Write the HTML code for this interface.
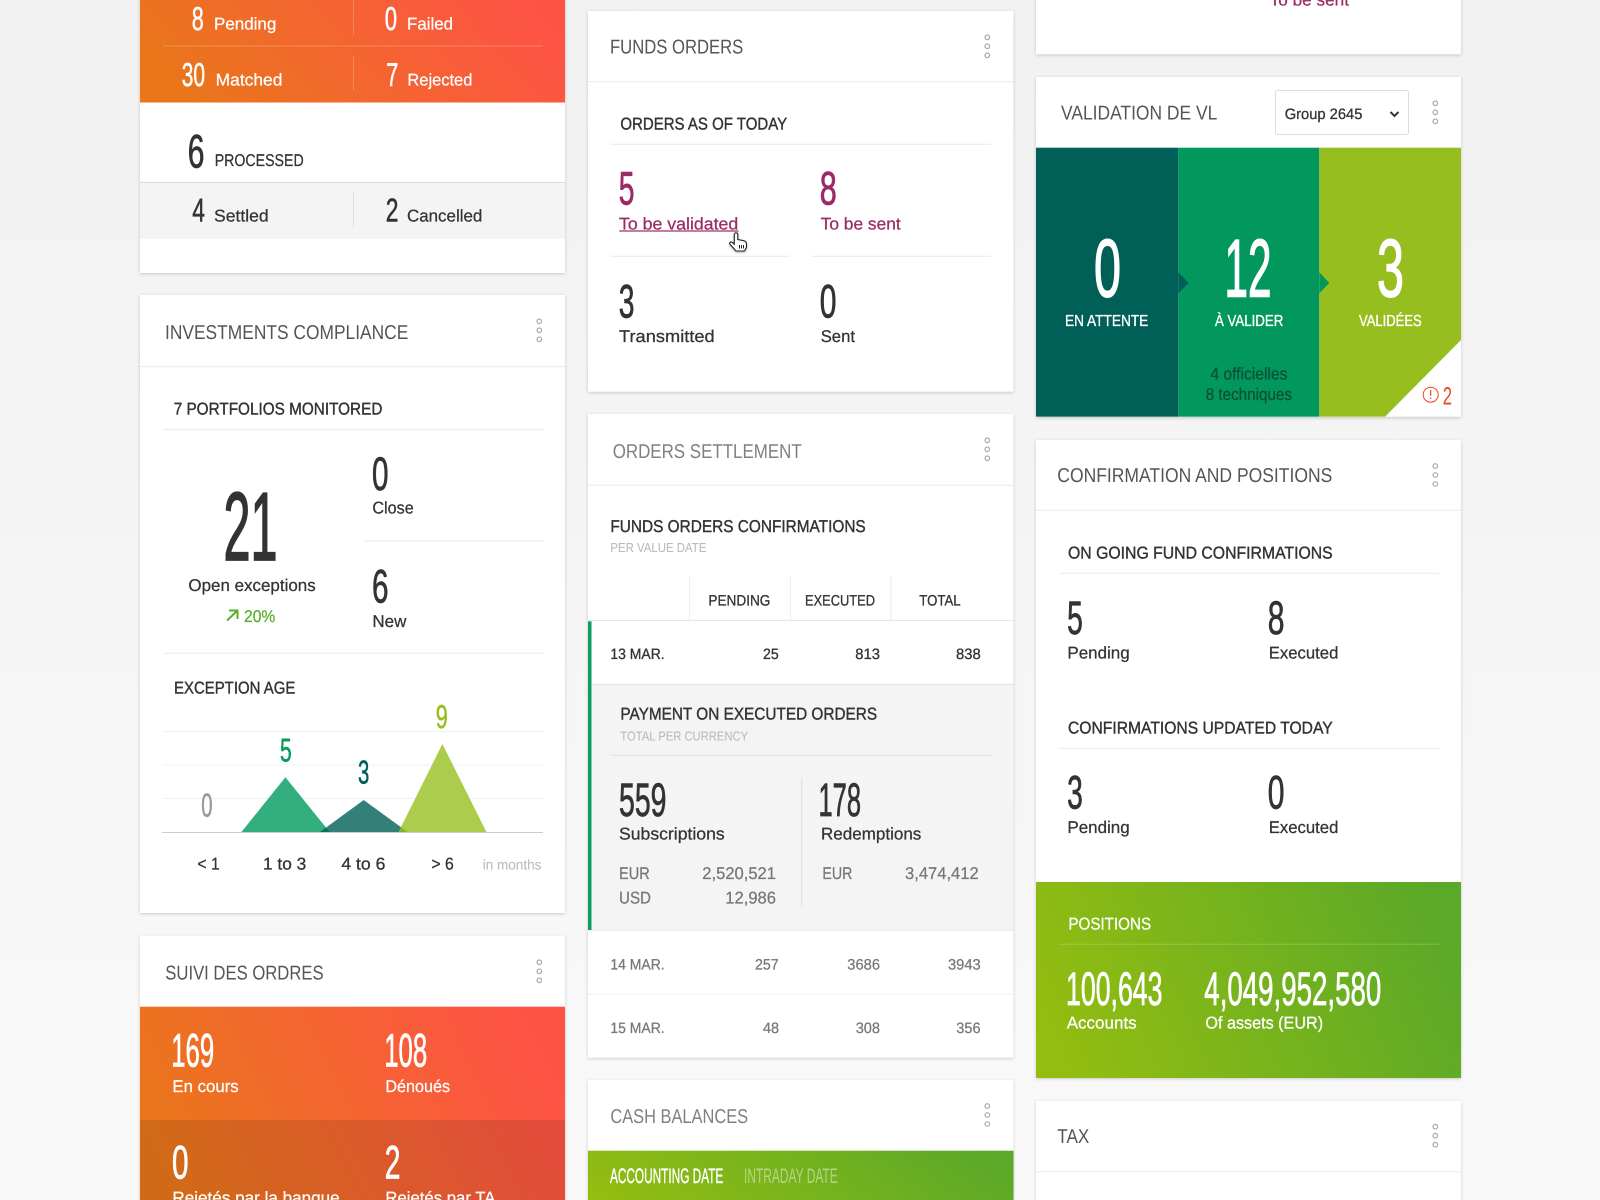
<!DOCTYPE html>
<html lang="en"><head><meta charset="utf-8"><title>Dashboard</title>
<style>
html,body{margin:0;padding:0;background:#f5f5f5;width:1600px;height:1200px;overflow:hidden}
svg{display:block}
text{font-family:"Liberation Sans",sans-serif;fill:#333;stroke:#333;stroke-width:.25;font-size:17px;text-rendering:geometricPrecision;transform:translateY(-.5px)}
.h{stroke-width:.4}
.ti{font-size:20px;fill:#555;stroke:none}
.tg{font-size:20px;fill:#808080;stroke:none}
.w{fill:#fff;stroke:#fff}
.wh{fill:#fff;stroke:#fff;stroke-width:.35}
.g{fill:#777;stroke:#777}
.s{font-size:15px}
.sb{font-size:15px;stroke-width:.3}
.sub{font-size:13px;fill:#bbb;stroke:#bbb;stroke-width:.1}
.m{fill:#9b2a66;stroke:#9b2a66}
.n33{font-size:33px;stroke-width:.55;transform:none}
.n47{font-size:47px;stroke-width:.8;transform:none}
.n97{font-size:97px;stroke-width:1.7;transform:none}
.n82{font-size:82px;stroke-width:1.5;transform:none}
.card{fill:#fff;filter:drop-shadow(0 1px 1.5px rgba(0,0,0,.18))}
.l{stroke:#ececec;stroke-width:1.2}
</style></head><body>
<svg xmlns="http://www.w3.org/2000/svg" width="1600" height="1200" viewBox="0 0 1600 1200">
<defs>
<linearGradient id="o" x1="0" y1=".62" x2="1" y2=".38"><stop offset="0" stop-color="#e9771a"/><stop offset="1" stop-color="#ff5247"/></linearGradient>
<linearGradient id="gr" x1="0" y1=".6" x2="1" y2=".4"><stop offset="0" stop-color="#93bd11"/><stop offset="1" stop-color="#5ba928"/></linearGradient>
<linearGradient id="bg" x1="0" y1="0" x2="0" y2="1"><stop offset="0" stop-color="#f1f1f1"/><stop offset="1" stop-color="#f9f9f9"/></linearGradient>
<g id="d" fill="none" stroke="#aaa" stroke-width="1.2"><circle cx="0" cy="0" r="2.3"/><circle cx="0" cy="9" r="2.3"/><circle cx="0" cy="18" r="2.3"/></g>
</defs>
<rect width="1600" height="1200" fill="url(#bg)"/>

<!-- Column 1 -->
<rect class="card" x="140" y="-10" width="425" height="283"/>
<rect x="140" y="-10" width="425" height="112.500" fill="url(#o)"/>
<rect x="140" y="183" width="425" height="56" fill="#f4f4f4"/>
<line x1="140" x2="565" y1="182.500" y2="182.500" stroke="#ddd"/>
<line x1="163" x2="543" y1="46" y2="46" stroke="#fff" stroke-opacity=".22"/>
<path d="M353.500 0V35M353.500 56V91" stroke="#fff" stroke-opacity=".22"/>
<path d="M353.500 192V227" stroke="#ddd"/>
<text class="n33 w" x="191.700" y="30" textLength="12" lengthAdjust="spacingAndGlyphs">8</text>
<text class="w" x="214" y="30" textLength="62.300" lengthAdjust="spacingAndGlyphs">Pending</text>
<text class="n33 w" x="384.700" y="30" textLength="12.300" lengthAdjust="spacingAndGlyphs">0</text>
<text class="w" x="407" y="30" textLength="46" lengthAdjust="spacingAndGlyphs">Failed</text>
<text class="n33 w" x="181.700" y="86" textLength="23.300" lengthAdjust="spacingAndGlyphs">30</text>
<text class="w" x="215.700" y="86" textLength="66.700" lengthAdjust="spacingAndGlyphs">Matched</text>
<text class="n33 w" x="386.300" y="86" textLength="12" lengthAdjust="spacingAndGlyphs">7</text>
<text class="w" x="407.400" y="86" textLength="65" lengthAdjust="spacingAndGlyphs">Rejected</text>
<text class="n47" x="187.800" y="167.300" textLength="16.700" lengthAdjust="spacingAndGlyphs">6</text>
<text x="214.700" y="166.700" textLength="89" lengthAdjust="spacingAndGlyphs">PROCESSED</text>
<text class="n33" x="192.300" y="221.700" textLength="12.700" lengthAdjust="spacingAndGlyphs">4</text>
<text x="214" y="222" textLength="54.700" lengthAdjust="spacingAndGlyphs">Settled</text>
<text class="n33" x="385.700" y="221.700" textLength="12.700" lengthAdjust="spacingAndGlyphs">2</text>
<text x="407" y="222" textLength="75.300" lengthAdjust="spacingAndGlyphs">Cancelled</text>

<rect class="card" x="140" y="295" width="425" height="618"/>
<line class="l" x1="140" x2="565" y1="366.500" y2="366.500"/>
<text class="ti" x="165" y="339.300" textLength="243.300" lengthAdjust="spacingAndGlyphs">INVESTMENTS COMPLIANCE</text>
<use href="#d" x="539.300" y="321.300"/>
<text class="h" x="173.700" y="415" textLength="208.700" lengthAdjust="spacingAndGlyphs">7 PORTFOLIOS MONITORED</text>
<line class="l" x1="163" x2="544" y1="429.500" y2="429.500"/>
<text class="n97" x="223.500" y="560" textLength="54" lengthAdjust="spacingAndGlyphs">21</text>
<text x="188.400" y="591.700" textLength="127.300" lengthAdjust="spacingAndGlyphs">Open exceptions</text>
<path d="M227 620.500L237.500 610.500M229 610.500H237.500V619" fill="none" stroke="#5cae2a" stroke-width="2"/>
<text x="244" y="622.700" textLength="31.300" lengthAdjust="spacingAndGlyphs" style="fill:#5cae2a;stroke:#5cae2a">20%</text>
<text class="n47" x="372" y="490" textLength="16.500" lengthAdjust="spacingAndGlyphs">0</text>
<text x="372.400" y="514" textLength="41.300" lengthAdjust="spacingAndGlyphs">Close</text>
<line class="l" x1="364" x2="543" y1="541" y2="541"/>
<text class="n47" x="372" y="602.700" textLength="16.500" lengthAdjust="spacingAndGlyphs">6</text>
<text x="372.400" y="627.300" textLength="34" lengthAdjust="spacingAndGlyphs">New</text>
<line class="l" x1="163" x2="544" y1="653.300" y2="653.300"/>
<text class="h" x="174" y="694" textLength="121.300" lengthAdjust="spacingAndGlyphs">EXCEPTION AGE</text>
<path d="M163 731.500H544M163 765H544M163 798.500H544" stroke="#f1f1f1"/>
<text class="n33" x="435.700" y="727.800" textLength="12" lengthAdjust="spacingAndGlyphs" style="fill:#97c01e;stroke:#97c01e">9</text>
<text class="n33" x="280" y="761.700" textLength="11.700" lengthAdjust="spacingAndGlyphs" style="fill:#0a9a5f;stroke:#0a9a5f">5</text>
<text class="n33" x="358" y="783.300" textLength="11.300" lengthAdjust="spacingAndGlyphs" style="fill:#006058;stroke:#006058">3</text>
<text class="n33" x="201.300" y="816.700" textLength="11.300" lengthAdjust="spacingAndGlyphs" style="fill:#999;stroke:#999">0</text>
<path d="M241 832.500L285.400 777.300L330 832.500Z" fill="#009a5f" fill-opacity=".8"/>
<path d="M319.300 832.500L363.700 800L408.300 832.500Z" fill="#006058" fill-opacity=".8"/>
<path d="M398.300 832.500L442.400 744L486.700 832.500Z" fill="#97c01e" fill-opacity=".8"/>
<line x1="162" x2="543" y1="832.500" y2="832.500" stroke="#ccc"/>
<text class="sb" x="197.400" y="870" textLength="22.300" lengthAdjust="spacingAndGlyphs" style="font-size:17px">&lt; 1</text>
<text class="sb" x="263" y="870" textLength="43.300" lengthAdjust="spacingAndGlyphs" style="font-size:17px">1 to 3</text>
<text class="sb" x="341.400" y="870" textLength="44" lengthAdjust="spacingAndGlyphs" style="font-size:17px">4 to 6</text>
<text class="sb" x="431.400" y="870" textLength="22.300" lengthAdjust="spacingAndGlyphs" style="font-size:17px">&gt; 6</text>
<text x="482.700" y="870" textLength="58.700" lengthAdjust="spacingAndGlyphs" style="font-size:14px;fill:#bbb;stroke:#bbb;stroke-width:.1">in months</text>

<rect class="card" x="140" y="935.700" width="425" height="300"/>
<text class="ti" x="165.300" y="980" textLength="158.300" lengthAdjust="spacingAndGlyphs">SUIVI DES ORDRES</text>
<use href="#d" x="539.300" y="962.300"/>
<rect x="140" y="1006.700" width="425" height="200" fill="url(#o)"/>
<rect x="140" y="1120" width="425" height="90" fill="#000" fill-opacity=".1"/>
<text class="n47 w" x="171.200" y="1066.700" textLength="43" lengthAdjust="spacingAndGlyphs">169</text>
<text class="n47 w" x="384.200" y="1066.700" textLength="43" lengthAdjust="spacingAndGlyphs">108</text>
<text class="w" x="172.400" y="1092.300" textLength="66.300" lengthAdjust="spacingAndGlyphs">En cours</text>
<text class="w" x="385.400" y="1092.300" textLength="64.700" lengthAdjust="spacingAndGlyphs">Dénoués</text>
<text class="n47 w" x="172" y="1178.300" textLength="16.500" lengthAdjust="spacingAndGlyphs">0</text>
<text class="n47 w" x="384.800" y="1178.300" textLength="15.700" lengthAdjust="spacingAndGlyphs">2</text>
<text class="w" x="172.400" y="1204" textLength="167.300" lengthAdjust="spacingAndGlyphs">Rejetés par la banque</text>
<text class="w" x="385.400" y="1204" textLength="110" lengthAdjust="spacingAndGlyphs">Rejetés par TA</text>

<!-- Column 2 -->
<rect class="card" x="588" y="11" width="425.500" height="380.700"/>
<line class="l" x1="588" x2="1013.500" y1="81.700" y2="81.700"/>
<text class="ti" x="610" y="54" textLength="133.300" lengthAdjust="spacingAndGlyphs">FUNDS ORDERS</text>
<use href="#d" x="987.300" y="37.300"/>
<text class="h" x="620.400" y="130" textLength="166.700" lengthAdjust="spacingAndGlyphs">ORDERS AS OF TODAY</text>
<line class="l" x1="610.300" x2="991" y1="144.300" y2="144.300"/>
<text class="n47 m" x="618.800" y="204.300" textLength="15.700" lengthAdjust="spacingAndGlyphs">5</text>
<text class="n47 m" x="819.800" y="204.300" textLength="17" lengthAdjust="spacingAndGlyphs">8</text>
<text class="m" x="619" y="229.800" textLength="119.300" lengthAdjust="spacingAndGlyphs">To be validated</text>
<rect x="619.300" y="230.400" width="119.300" height="1.200" fill="#9b2a66"/>
<text class="m" x="820.700" y="229.800" textLength="80" lengthAdjust="spacingAndGlyphs">To be sent</text>
<line class="l" x1="610" x2="789.700" y1="256.300" y2="256.300"/>
<line class="l" x1="812" x2="991" y1="256.300" y2="256.300"/>
<text class="n47" x="618.800" y="317.700" textLength="15.700" lengthAdjust="spacingAndGlyphs">3</text>
<text class="n47" x="819.800" y="317.700" textLength="16.700" lengthAdjust="spacingAndGlyphs">0</text>
<text x="619" y="342.700" textLength="95.700" lengthAdjust="spacingAndGlyphs">Transmitted</text>
<text x="820.700" y="342.700" textLength="34.300" lengthAdjust="spacingAndGlyphs">Sent</text>
<path d="M736 232.800c1.100 0 1.800.8 1.800 1.900V239.600l5.400 1c2 .4 3.300 1.500 3.300 3.400v3.200l-2 3.800h-8.500l-6-6.800c-1-1.100.6-3 2-1.900l2.300 1.800V234.700c0-1.100.8-1.900 1.700-1.900z" fill="#fff" stroke="#222" stroke-width="1.100" style="filter:drop-shadow(0 1px 1px rgba(0,0,0,.3))"/>
<path d="M739.500 245v3.500M741.500 245v3.500M743.500 245v3.500" stroke="#222"/>

<rect class="card" x="588" y="414" width="425.500" height="643.700"/>
<line class="l" x1="588" x2="1013.500" y1="485.300" y2="485.300"/>
<text class="tg" x="612.700" y="458.300" textLength="189" lengthAdjust="spacingAndGlyphs">ORDERS SETTLEMENT</text>
<use href="#d" x="987.300" y="440.300"/>
<text class="h" x="610.400" y="532.300" textLength="255.300" lengthAdjust="spacingAndGlyphs">FUNDS ORDERS CONFIRMATIONS</text>
<text class="sub" x="610.400" y="552.300" textLength="96" lengthAdjust="spacingAndGlyphs">PER VALUE DATE</text>
<path d="M689.500 575.700V620M790.500 575.700V620M891 575.700V620" stroke="#eee" stroke-width="1.200"/>
<text class="sb" x="708.400" y="606" textLength="62" lengthAdjust="spacingAndGlyphs">PENDING</text>
<text class="sb" x="805" y="606" textLength="70" lengthAdjust="spacingAndGlyphs">EXECUTED</text>
<text class="sb" x="919.300" y="606" textLength="41.300" lengthAdjust="spacingAndGlyphs">TOTAL</text>
<line x1="588" x2="1013.500" y1="620.500" y2="620.500" stroke="#e8e8e8"/>
<rect x="588" y="684.300" width="425.500" height="245.700" fill="#f4f4f4"/>
<line x1="588" x2="1013.500" y1="684.300" y2="684.300" stroke="#e2e2e2"/>
<line x1="588" x2="1013.500" y1="930.300" y2="930.300" stroke="#e8e8e8"/>
<rect x="588" y="621.300" width="3.500" height="308.700" fill="#0a9f62"/>
<text class="sb" x="610.400" y="659.300" textLength="54.300" lengthAdjust="spacingAndGlyphs">13 MAR.</text>
<text class="sb" x="763" y="659.300" textLength="15.700" lengthAdjust="spacingAndGlyphs">25</text>
<text class="sb" x="855.300" y="659.300" textLength="24.700" lengthAdjust="spacingAndGlyphs">813</text>
<text class="sb" x="956" y="659.300" textLength="24.700" lengthAdjust="spacingAndGlyphs">838</text>
<text class="h" x="620.400" y="720" textLength="256.700" lengthAdjust="spacingAndGlyphs">PAYMENT ON EXECUTED ORDERS</text>
<text class="sub" x="620.400" y="741" textLength="127.700" lengthAdjust="spacingAndGlyphs">TOTAL PER CURRENCY</text>
<line x1="610.700" x2="991" y1="755.300" y2="755.300" stroke="#e2e2e2"/>
<line x1="801.700" x2="801.700" y1="778.300" y2="907.300" stroke="#ddd"/>
<text class="n47" x="619" y="816" textLength="47.500" lengthAdjust="spacingAndGlyphs">559</text>
<text class="n47" x="818.500" y="816" textLength="42.500" lengthAdjust="spacingAndGlyphs">178</text>
<text x="619" y="840" textLength="105.700" lengthAdjust="spacingAndGlyphs">Subscriptions</text>
<text x="821" y="840" textLength="100.300" lengthAdjust="spacingAndGlyphs">Redemptions</text>
<text class="g" x="619" y="879.300" textLength="30.700" lengthAdjust="spacingAndGlyphs">EUR</text>
<text class="g" x="702.300" y="879.300" textLength="73.700" lengthAdjust="spacingAndGlyphs">2,520,521</text>
<text class="g" x="619" y="904" textLength="32" lengthAdjust="spacingAndGlyphs">USD</text>
<text class="g" x="725.300" y="904" textLength="50.700" lengthAdjust="spacingAndGlyphs">12,986</text>
<text class="g" x="822.400" y="879.300" textLength="30" lengthAdjust="spacingAndGlyphs">EUR</text>
<text class="g" x="905" y="879.300" textLength="73.700" lengthAdjust="spacingAndGlyphs">3,474,412</text>
<text class="g s" x="610.400" y="970" textLength="54.300" lengthAdjust="spacingAndGlyphs">14 MAR.</text>
<text class="g s" x="755" y="970" textLength="23.700" lengthAdjust="spacingAndGlyphs">257</text>
<text class="g s" x="847.300" y="970" textLength="32.700" lengthAdjust="spacingAndGlyphs">3686</text>
<text class="g s" x="948" y="970" textLength="32.700" lengthAdjust="spacingAndGlyphs">3943</text>
<line x1="588" x2="1013.500" y1="994.300" y2="994.300" stroke="#f0f0f0"/>
<text class="g s" x="610.400" y="1033.300" textLength="54.300" lengthAdjust="spacingAndGlyphs">15 MAR.</text>
<text class="g s" x="763" y="1033.300" textLength="16" lengthAdjust="spacingAndGlyphs">48</text>
<text class="g s" x="855.700" y="1033.300" textLength="24.300" lengthAdjust="spacingAndGlyphs">308</text>
<text class="g s" x="956.300" y="1033.300" textLength="24.300" lengthAdjust="spacingAndGlyphs">356</text>

<rect class="card" x="588" y="1080" width="425.500" height="140"/>
<text class="tg" x="610.400" y="1123.300" textLength="137.700" lengthAdjust="spacingAndGlyphs">CASH BALANCES</text>
<use href="#d" x="987.300" y="1106" style="stroke:#888"/>
<rect x="588" y="1150.700" width="425.500" height="60" fill="url(#gr)"/>
<text class="w" x="610" y="1183.300" textLength="113.300" lengthAdjust="spacingAndGlyphs" style="font-size:21px;stroke-width:.4">ACCOUNTING DATE</text>
<text x="744" y="1183.300" textLength="93.700" lengthAdjust="spacingAndGlyphs" style="font-size:21px;fill:#fff;fill-opacity:.45;stroke:none">INTRADAY DATE</text>

<!-- Column 3 -->
<rect class="card" x="1036" y="-20" width="425" height="74.300"/>
<text class="m" x="1269.700" y="6" textLength="79.300" lengthAdjust="spacingAndGlyphs">To be sent</text>

<rect class="card" x="1036" y="77" width="425" height="340"/>
<text class="ti" x="1061" y="120" textLength="156.300" lengthAdjust="spacingAndGlyphs">VALIDATION DE VL</text>
<rect x="1275.500" y="90.500" width="133" height="44" rx="2" fill="#fff" stroke="#ddd"/>
<text class="sb" x="1284.700" y="119.300" textLength="77.700" lengthAdjust="spacingAndGlyphs">Group 2645</text>
<path d="M1390.500 112L1394.500 116L1398.500 112" fill="none" stroke="#333" stroke-width="2"/>
<use href="#d" x="1435.300" y="103.300"/>
<rect x="1036" y="147.700" width="142.300" height="269" fill="#006058"/>
<rect x="1178.300" y="147.700" width="141" height="269" fill="#02975d"/>
<rect x="1319.300" y="147.700" width="141.700" height="269" fill="#96be1e"/>
<path d="M1178.300 272.300L1188.700 283L1178.300 293.300Z" fill="#006058"/>
<path d="M1319.300 272.300L1329.300 283L1319.300 293.300Z" fill="#02975d"/>
<path d="M1461 340V416.700H1385Z" fill="#fff"/>
<text class="n82 w" x="1094" y="296.700" textLength="27" lengthAdjust="spacingAndGlyphs">0</text>
<text class="n82 w" x="1224.500" y="296.700" textLength="47" lengthAdjust="spacingAndGlyphs">12</text>
<text class="n82 w" x="1377" y="296.700" textLength="27" lengthAdjust="spacingAndGlyphs">3</text>
<text class="wh" x="1065" y="326.700" textLength="83.300" lengthAdjust="spacingAndGlyphs" style="font-size:16px">EN ATTENTE</text>
<text class="wh" x="1215" y="326.700" textLength="68.300" lengthAdjust="spacingAndGlyphs" style="font-size:16px">À VALIDER</text>
<text class="wh" x="1359" y="326.700" textLength="62.700" lengthAdjust="spacingAndGlyphs" style="font-size:16px">VALIDÉES</text>
<text x="1210.400" y="380" textLength="77" lengthAdjust="spacingAndGlyphs" style="fill:#0a4f38;stroke:#0a4f38">4 officielles</text>
<text x="1205.700" y="400.700" textLength="86.300" lengthAdjust="spacingAndGlyphs" style="fill:#0a4f38;stroke:#0a4f38">8 techniques</text>
<circle cx="1430.700" cy="394.700" r="7.500" fill="none" stroke="#f0451e" stroke-width="1"/>
<path d="M1430.700 390V395.800M1430.700 397.500V399" stroke="#f0451e" stroke-width="1.200"/>
<text x="1442.700" y="404.300" textLength="9.300" lengthAdjust="spacingAndGlyphs" style="font-size:25px;fill:#f0451e;stroke:none;transform:none">2</text>

<rect class="card" x="1036" y="440" width="425" height="638"/>
<line class="l" x1="1036" x2="1461" y1="510.300" y2="510.300"/>
<text class="ti" x="1057.300" y="482.700" textLength="275" lengthAdjust="spacingAndGlyphs">CONFIRMATION AND POSITIONS</text>
<use href="#d" x="1435.300" y="466"/>
<text class="h" x="1068" y="559" textLength="264.700" lengthAdjust="spacingAndGlyphs">ON GOING FUND CONFIRMATIONS</text>
<line class="l" x1="1058.700" x2="1439" y1="573.300" y2="573.300"/>
<text class="n47" x="1067.100" y="634" textLength="15.700" lengthAdjust="spacingAndGlyphs">5</text>
<text class="n47" x="1267.800" y="634" textLength="16.700" lengthAdjust="spacingAndGlyphs">8</text>
<text x="1067.400" y="659" textLength="62.300" lengthAdjust="spacingAndGlyphs">Pending</text>
<text x="1268.700" y="659" textLength="69.700" lengthAdjust="spacingAndGlyphs">Executed</text>
<text class="h" x="1068" y="734" textLength="264.700" lengthAdjust="spacingAndGlyphs">CONFIRMATIONS UPDATED TODAY</text>
<line class="l" x1="1058.700" x2="1439" y1="748.300" y2="748.300"/>
<text class="n47" x="1067.100" y="808.700" textLength="15.700" lengthAdjust="spacingAndGlyphs">3</text>
<text class="n47" x="1267.800" y="808.700" textLength="16.700" lengthAdjust="spacingAndGlyphs">0</text>
<text x="1067.400" y="833.300" textLength="62.300" lengthAdjust="spacingAndGlyphs">Pending</text>
<text x="1268.700" y="833.300" textLength="69.700" lengthAdjust="spacingAndGlyphs">Executed</text>
<rect x="1036" y="882" width="425" height="196" fill="url(#gr)"/>
<text class="w" x="1068.400" y="930" textLength="82.700" lengthAdjust="spacingAndGlyphs">POSITIONS</text>
<line x1="1058.700" x2="1439" y1="944.300" y2="944.300" stroke="#fff" stroke-opacity=".2"/>
<text class="n47 w" x="1066" y="1005" textLength="96.500" lengthAdjust="spacingAndGlyphs">100,643</text>
<text class="n47 w" x="1204.300" y="1005" textLength="177" lengthAdjust="spacingAndGlyphs">4,049,952,580</text>
<text class="w" x="1066.700" y="1029" textLength="70" lengthAdjust="spacingAndGlyphs">Accounts</text>
<text class="w" x="1205.400" y="1029" textLength="117.700" lengthAdjust="spacingAndGlyphs">Of assets (EUR)</text>

<rect class="card" x="1036" y="1101" width="425" height="130"/>
<line class="l" x1="1036" x2="1461" y1="1171.700" y2="1171.700"/>
<text class="ti" x="1057.300" y="1143.300" textLength="32" lengthAdjust="spacingAndGlyphs">TAX</text>
<use href="#d" x="1435.300" y="1126.700"/>
</svg>
</body></html>
